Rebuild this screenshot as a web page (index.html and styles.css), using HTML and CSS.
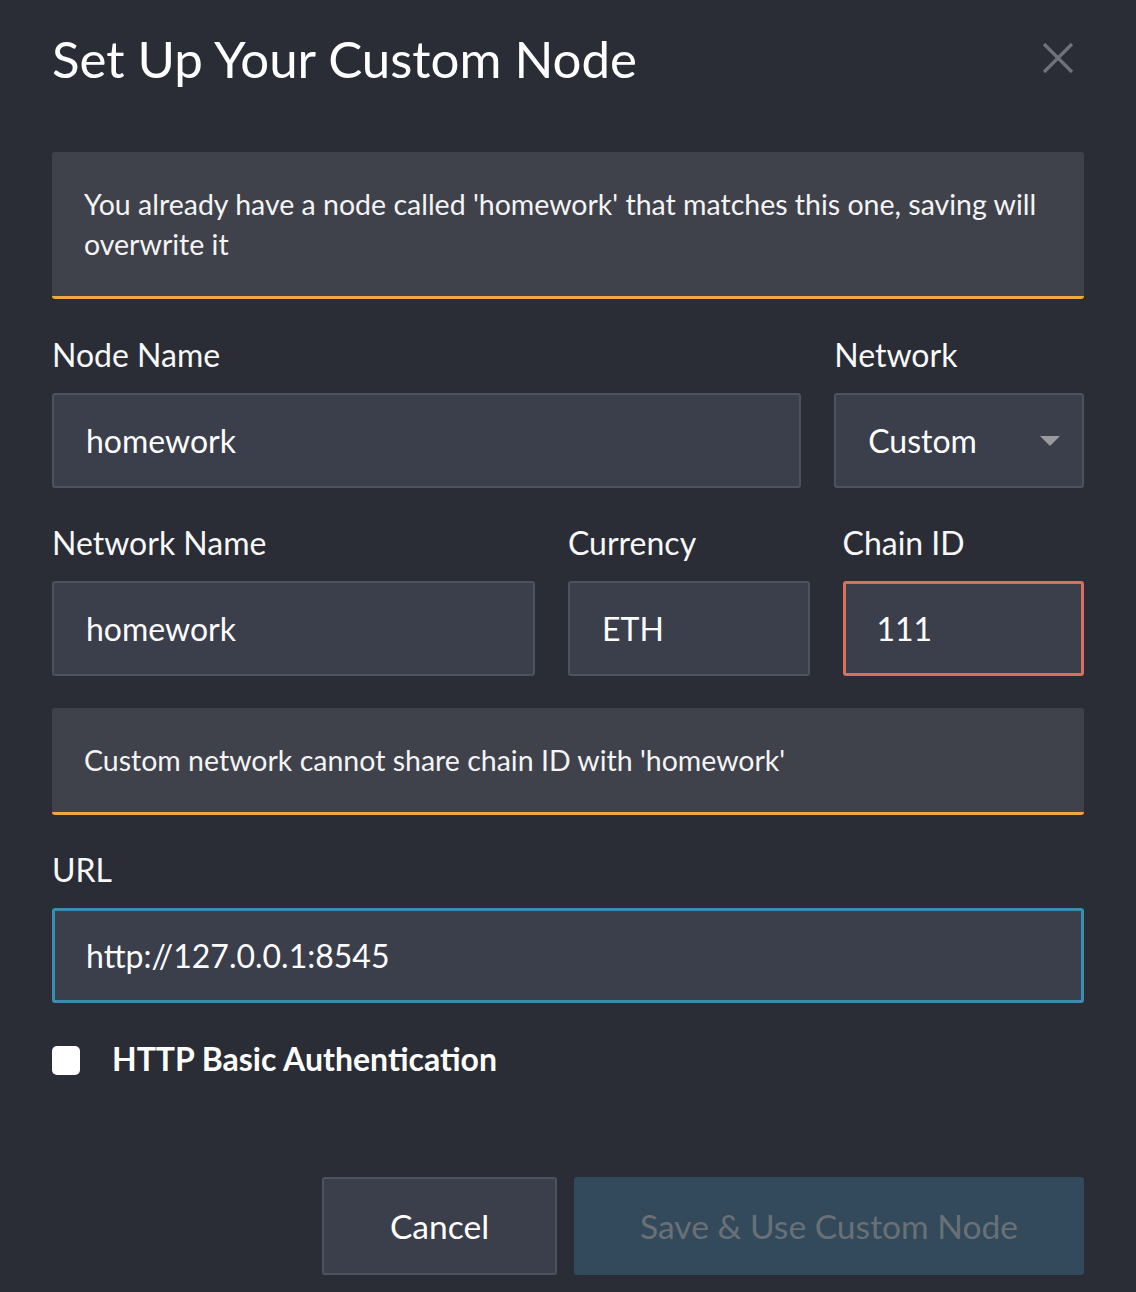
FILE: index.html
```html
<!DOCTYPE html>
<html>
<head>
<meta charset="utf-8">
<link rel="stylesheet" href="styles.css">
</head>
<body>
<div class="modal">
  <div class="header">
    <h1 class="title">Set Up Your Custom Node</h1>
    <button class="close" aria-label="Close">
      <svg width="32" height="32" viewBox="0 0 32 32"><path d="M2 2 L30 30 M30 2 L2 30" stroke="#6f727b" stroke-width="3.2" fill="none"/></svg>
    </button>
  </div>
  <div class="alert">You already have a node called 'homework' that matches this one, saving will overwrite it</div>
  <div class="row row-a">
    <div class="field">
      <label class="label">Node Name</label>
      <div class="input">homework</div>
    </div>
    <div class="field">
      <label class="label">Network</label>
      <div class="input select">Custom<span class="caret"></span></div>
    </div>
  </div>
  <div class="row row-b">
    <div class="field">
      <label class="label">Network Name</label>
      <div class="input">homework</div>
    </div>
    <div class="field">
      <label class="label">Currency</label>
      <div class="input">ETH</div>
    </div>
    <div class="field">
      <label class="label">Chain ID</label>
      <div class="input invalid">111</div>
    </div>
  </div>
  <div class="alert alert-single">Custom network cannot share chain ID with 'homework'</div>
  <div class="field url-field">
    <label class="label">URL</label>
    <div class="input focused">http://127.0.0.1:8545</div>
  </div>
  <div class="check">
    <span class="box"></span>
    <span class="check-label">HTTP Basic Authentication</span>
  </div>
  <div class="actions">
    <button class="btn btn-cancel">Cancel</button>
    <button class="btn btn-save">Save &amp; Use Custom Node</button>
  </div>
</div>
</body>
</html>
```

FILE: styles.css
```css
html, body {
  margin: 0;
  padding: 0;
  background: #2a2d36;
}
body {
  font-family: Lato, "Open Sans", sans-serif;
  color: #ffffff;
}
.modal {
  padding: 0 52px 0 52px;
  box-sizing: border-box;
  width: 1136px;
  height: 1292px;
}
.header {
  display: flex;
  justify-content: space-between;
  align-items: center;
  height: 116px;
  margin-bottom: 36px;
}
.title {
  margin: 0;
  font-weight: 400;
  font-size: 51px;
  line-height: 1;
}
.close {
  background: none;
  border: 0;
  padding: 0;
  margin-right: 10px;
  width: 32px;
  height: 32px;
  display: flex;
}
.alert {
  background: #3f424b;
  border-bottom: 3px solid #f2a640;
  border-radius: 3px;
  padding: 32px 32px 32px 32px;
  font-size: 28.5px;
  line-height: 40px;
  color: #f4f4f4;
}
.row {
  display: grid;
  gap: 33px;
  margin-top: 36px;
}
.row-a { grid-template-columns: 3fr 1fr; }
.row-b { grid-template-columns: 2fr 1fr 1fr; margin-top: 35px; }
.field {
  display: flex;
  flex-direction: column;
}
.label {
  font-size: 32px;
  line-height: 40px;
  margin-bottom: 18px;
  color: #f8f8f8;
}
.input {
  box-sizing: border-box;
  height: 95px;
  background: #3b3e4b;
  border: 2px solid #4e525f;
  border-radius: 3px;
  padding: 0 32px;
  display: flex;
  align-items: center;
  font-size: 32px;
  color: #fdfdfd;
}
.select {
  justify-content: space-between;
}
.caret {
  width: 0;
  height: 0;
  border-left: 10px solid transparent;
  border-right: 10px solid transparent;
  border-top: 10px solid #9a9a9e;
  margin-right: -10px;
}
.invalid {
  border: 3px solid #d8705f;
  padding-left: 31px;
}
.focused {
  border: 3px solid #3a8db0;
  padding-left: 31px;
}
.alert-single {
  margin-top: 32px;
}
.url-field {
  margin-top: 35px;
}
.check {
  display: flex;
  align-items: center;
  margin-top: 36px;
}
.box {
  width: 28px;
  height: 29px;
  background: #ffffff;
  border-radius: 5px;
  margin-top: 4px;
}
.check-label {
  margin-left: 32px;
  font-size: 32px;
  font-weight: 700;
}
.actions {
  display: flex;
  justify-content: flex-end;
  gap: 17px;
  margin-top: 99px;
}
.btn {
  font-family: Lato, "Open Sans", sans-serif;
  font-size: 33.6px;
  height: 98px;
  border-radius: 3px;
  cursor: pointer;
}
.btn-cancel {
  width: 235px;
  background: #3b3e4b;
  border: 2px solid #4e525f;
  color: #ffffff;
}
.btn-save {
  width: 510px;
  background: #324a5b;
  border: 0;
  color: #6b7076;
}
```
